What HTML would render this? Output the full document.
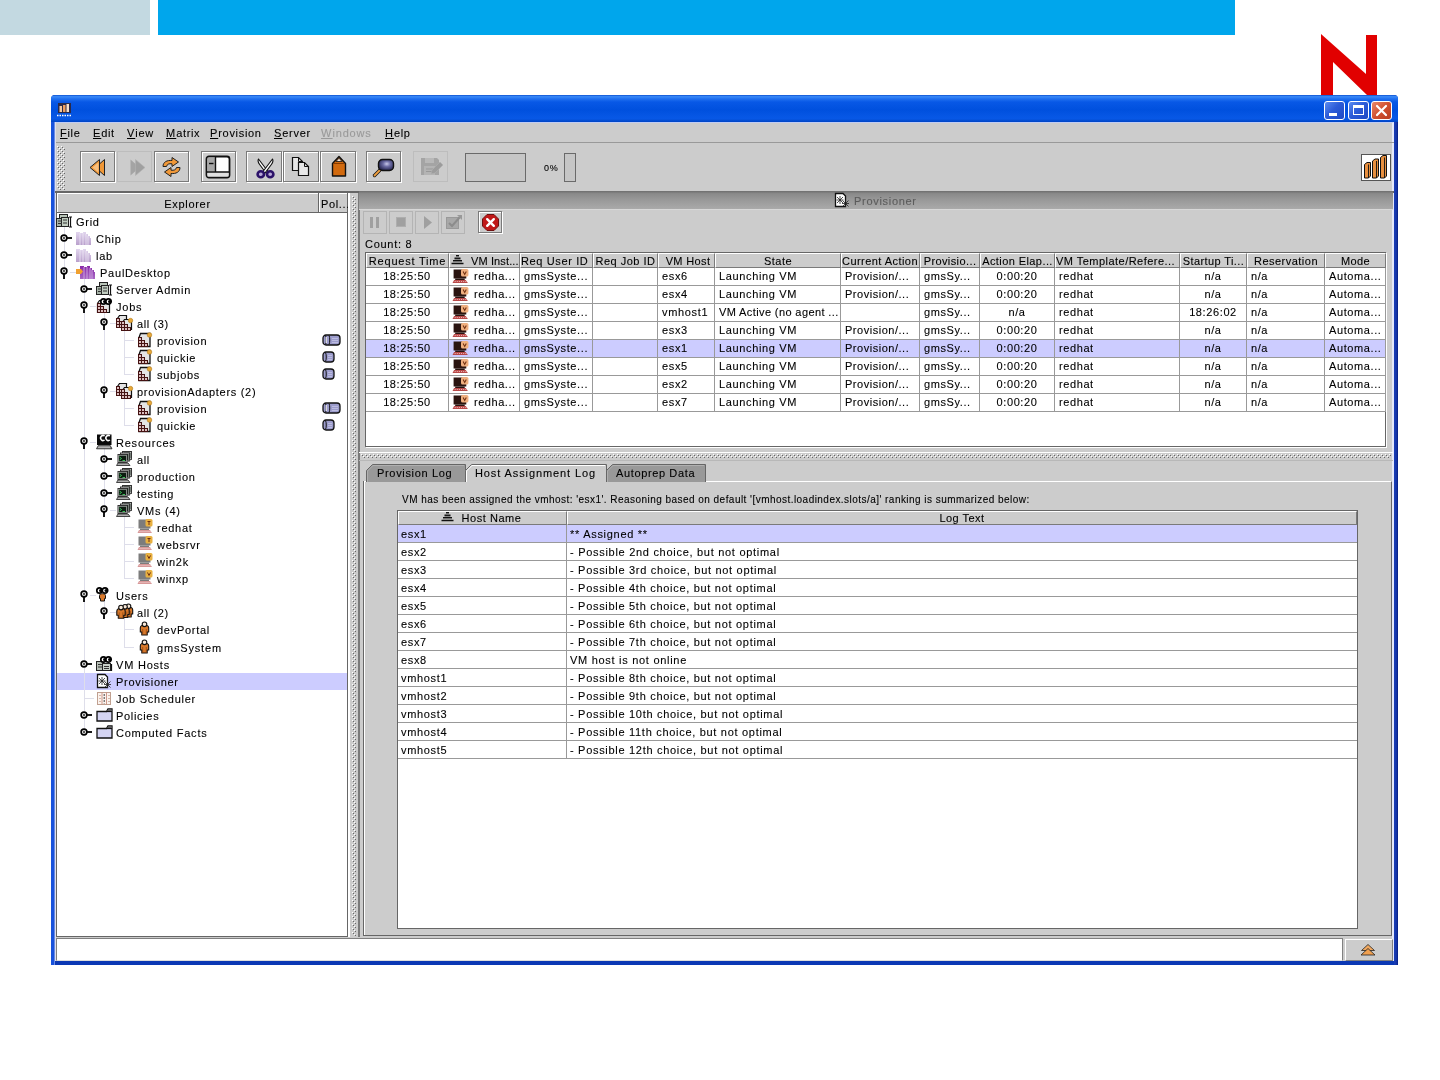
<!DOCTYPE html><html><head><meta charset="utf-8"><title>Provisioner</title><style>
*{box-sizing:border-box;margin:0;padding:0}
html,body{width:1440px;height:1080px;overflow:hidden;background:#fff}
body{position:relative;font-family:"Liberation Sans",sans-serif;font-size:12px;color:#000;letter-spacing:.25px;-webkit-text-stroke-width:.1px}
.a{position:absolute}
.t{position:absolute;white-space:nowrap;line-height:14px;height:14px}
.btn{position:absolute;border:1px solid #7a7a7a;box-shadow:1px 1px 0 #fff,inset 1px 1px 0 #fff;background:#ccc}
.btnd{position:absolute;border:1px solid #bdbdbd;background:#ccc}
.hc{position:absolute;top:0;height:15px;border-right:1px solid #7a7a7a;border-bottom:1px solid #7a7a7a;border-left:1px solid #fff;border-top:1px solid #fff;background:#ccc;line-height:14px;overflow:hidden;white-space:nowrap;text-align:center;letter-spacing:0}
.row{position:absolute;left:0;height:18px;border-bottom:1px solid #999;background:#fff}
.row.sel{background:#ccf}
.c{position:absolute;top:0;height:17px;line-height:17px;border-right:1px solid #999;overflow:hidden;white-space:nowrap;padding-left:4px;letter-spacing:.12px}
.c.ctr{text-align:center;padding-left:0}
u{text-decoration:underline;text-decoration-thickness:1px;text-underline-offset:1px}
svg{position:absolute;overflow:visible}
#root{position:absolute;left:0;top:0;width:1440px;height:1080px;will-change:transform}
</style></head><body><div id="root">
<div class="a" style="left:0;top:0;width:150px;height:35px;background:#c3d9e1"></div>
<div class="a" style="left:158px;top:0;width:1077px;height:35px;background:#00a6ec"></div>
<svg class="a" style="left:0;top:0" width="1440" height="100"><polygon fill="#e10000" points="1321,34 1366,74 1366,35 1377,35 1377,96 1368,96 1333,62 1333,96 1321,96"></polygon></svg>
<div class="a" style="left:51px;top:95px;width:1347px;height:870px;background:#0d3fc4;border-radius:4px 4px 0 0"></div>
<div class="a" style="left:51px;top:95px;width:1347px;height:27px;border-radius:4px 4px 0 0;background:linear-gradient(#0c50d0 0,#3a8af8 6%,#2070f0 14%,#0858e6 26%,#0050de 55%,#0656e4 78%,#0858e6 88%,#0044c4 100%)"></div>
<div class="a" style="left:51px;top:122px;width:4px;height:843px;background:linear-gradient(90deg,#1852dc 0,#1852dc 3px,#6a8ae4 3px)"></div>
<div class="a" style="left:1394px;top:122px;width:4px;height:843px;background:linear-gradient(90deg,#1a3eb8 0,#1434a8 60%,#041c80 100%)"></div>
<div class="a" style="left:55px;top:961px;width:1339px;height:4px;background:#0b38b4"></div>
<div class="a" style="left:55px;top:122px;width:1339px;height:839px;background:#ccc;border-top:1px solid #c0ccf4;border-right:2px solid #e4e8fa"></div>
<svg class="a" style="left:57px;top:102px" width="18" height="16" viewBox="0 0 18 16">
<rect x="1" y="1" width="13" height="10" fill="#2a2a4a"></rect>
<rect x="2.5" y="4" width="2.5" height="6" fill="#f4c9a0"></rect><rect x="6" y="3" width="2.5" height="7" fill="#f0a060"></rect><rect x="9.5" y="2" width="2.5" height="8" fill="#f8e0c8"></rect>
<path d="M0 13.5h15" stroke="#fff" stroke-width="1.6" stroke-dasharray="1.5 1"></path>
</svg>
<div class="a" style="left:1324px;top:101px;width:21px;height:19px;border:1px solid #fff;border-radius:3px;background:linear-gradient(135deg,#5c8cf0 0,#2c5cd8 45%,#1c48c4 100%)"></div>
<div class="a" style="left:1329px;top:113px;width:8px;height:3px;background:#fff"></div>
<div class="a" style="left:1348px;top:101px;width:21px;height:19px;border:1px solid #fff;border-radius:3px;background:linear-gradient(135deg,#5c8cf0 0,#2c5cd8 45%,#1c48c4 100%)"></div>
<div class="a" style="left:1353px;top:105px;width:11px;height:10px;border:1px solid #fff;border-top:3px solid #fff"></div>
<div class="a" style="left:1371px;top:101px;width:21px;height:19px;border:1px solid #fff;border-radius:3px;background:linear-gradient(135deg,#e88a6c 0,#d05030 50%,#b83c20 100%)"></div>
<svg class="a" style="left:1376px;top:105px" width="11" height="11"><path d="M1 1l9 9M10 1l-9 9" stroke="#fff" stroke-width="2.2" stroke-linecap="round"></path></svg>
<div class="a" style="left:55px;top:142px;width:1339px;height:1px;background:#999"></div>
<div class="a" style="left:55px;top:122px;width:1px;height:839px;background:#dcdfee"></div>
<div class="t" style="left:60px;top:126px;color:#000"><u><span style="font-size: 11px; letter-spacing: 0.86px;">F</span></u><span style="font-size: 11px; letter-spacing: 0.58px;">ile</span></div>
<div class="t" style="left:93px;top:126px;color:#000"><u><span style="font-size: 11px; letter-spacing: 0.92px;">E</span></u><span style="font-size: 11px; letter-spacing: 0.6px;">dit</span></div>
<div class="t" style="left:127px;top:126px;color:#000"><u><span style="font-size: 11px; letter-spacing: 0.91px;">V</span></u><span style="font-size: 11px; letter-spacing: 0.75px;">iew</span></div>
<div class="t" style="left:166px;top:126px;color:#000"><u><span style="font-size: 11px; letter-spacing: 1.08px;">M</span></u><span style="font-size: 11px; letter-spacing: 0.63px;">atrix</span></div>
<div class="t" style="left:210px;top:126px;color:#000"><u><span style="font-size: 11px; letter-spacing: 0.92px;">P</span></u><span style="font-size: 11px; letter-spacing: 0.68px;">rovision</span></div>
<div class="t" style="left:274px;top:126px;color:#000"><u><span style="font-size: 11px; letter-spacing: 0.92px;">S</span></u><span style="font-size: 11px; letter-spacing: 0.71px;">erver</span></div>
<div class="t" style="left:321px;top:126px;color:#999"><u><span style="font-size: 11px; letter-spacing: 1.19px;">W</span></u><span style="font-size: 11px; letter-spacing: 0.77px;">indows</span></div>
<div class="t" style="left:385px;top:126px;color:#000"><u><span style="font-size: 11px; letter-spacing: 0.97px;">H</span></u><span style="font-size: 11px; letter-spacing: 0.69px;">elp</span></div>
<div class="a" style="left:55px;top:191px;width:1339px;height:2px;background:#666"></div>
<div class="btn" style="left:80px;top:151px;width:35px;height:31px"></div>
<div class="btn" style="left:154px;top:151px;width:35px;height:31px"></div>
<div class="btn" style="left:201px;top:151px;width:35px;height:31px"></div>
<div class="btn" style="left:366px;top:151px;width:35px;height:31px"></div>
<div class="btn" style="left:246px;top:151px;width:36px;height:31px"></div>
<div class="btn" style="left:283px;top:151px;width:36px;height:31px"></div>
<div class="btn" style="left:320px;top:151px;width:36px;height:31px"></div>
<div class="btnd" style="left:117px;top:151px;width:35px;height:31px"></div>
<div class="btnd" style="left:413px;top:151px;width:35px;height:31px"></div>
<div class="a" style="left:465px;top:153px;width:61px;height:29px;border:1px solid #6a6a6a;background:#c6c6c6"></div>
<div class="t" style="left:544px;top:161px;font-size:10px;letter-spacing:0"><span style="font-size: 9px; letter-spacing: 0.72px;">0%</span></div>
<div class="a" style="left:564px;top:153px;width:12px;height:29px;border:1px solid #6a6a6a;background:#c6c6c6"></div>
<div class="a" style="left:1361px;top:154px;width:30px;height:27px;border:1px solid #555;background:#fff"></div>
<svg style="left:89px;top:158px" width="17" height="19" viewBox="0 0 17 19"><path d="M15.500 1.500v16l-9-8z" fill="#f09838" stroke="#222" stroke-width="1"></path><path d="M10.500 1.500v16l-9.500-8z" fill="#f09838" stroke="#222" stroke-width="1"></path><path d="M9.500 4.500v10l-6-5z" fill="#f8c080"></path></svg>
<svg style="left:129px;top:158px" width="17" height="19" viewBox="0 0 17 19"><path d="M1.500 1.500v16l9-8z" fill="#a4a4a4"></path><path d="M6.500 1.500v16l9.500-8z" fill="#a0a0a0" stroke="#b4b4b4" stroke-width="0.600"></path></svg>
<svg style="left:161px;top:156px" width="21" height="22" viewBox="0 0 21 22"><path d="M2 10.500c0-4.500 4-6.500 9-6V1.500l6.500 4.500-6.500 4.500V7.800c-3-.4-5 .4-5.500 2.700z" fill="#f09838" stroke="#222" stroke-width="1" stroke-linejoin="round"></path><path d="M19 11.500c0 4.500-4 6.500-9 6v3l-6.500-4.500 6.500-4.500v2.700c3 .4 5-.4 5.500-2.700z" fill="#f09838" stroke="#222" stroke-width="1" stroke-linejoin="round"></path></svg>
<svg style="left:205px;top:155px" width="26" height="24" viewBox="0 0 26 24"><rect x="1.500" y="1.500" width="23" height="21" rx="2.500" fill="#fff" stroke="#111" stroke-width="1.800"></rect><rect x="2.500" y="2.500" width="7.500" height="14" fill="#a8a8a8"></rect><rect x="2.500" y="17.500" width="21" height="4" fill="#e0e0e0"></rect><path d="M10.500 2v15M2 17h22" stroke="#111" stroke-width="1.400"></path><path d="M4 8.500h4.500" stroke="#111" stroke-width="1.400"></path></svg>
<svg style="left:256px;top:158px" width="19" height="21" viewBox="0 0 19 21"><path d="M2.500 1c-1 1.500 0 4 1.500 6l6 8 2-1.500z" fill="#fff" stroke="#111" stroke-width="1.100" stroke-linejoin="round"></path><path d="M16.500 1c1 1.500 0 4-1.500 6l-6 8-2-1.500z" fill="#fff" stroke="#111" stroke-width="1.100" stroke-linejoin="round"></path><ellipse cx="4.800" cy="16.300" rx="3.200" ry="3" fill="#b8a8d8" stroke="#2c1268" stroke-width="2.600"></ellipse><ellipse cx="14.200" cy="16.300" rx="3.200" ry="3" fill="#b8a8d8" stroke="#2c1268" stroke-width="2.600"></ellipse></svg>
<svg style="left:291px;top:156px" width="20" height="21" viewBox="0 0 20 21"><path d="M1.5 1.5h6l4 4v9h-10z" fill="#e8e8e8" stroke="#111" stroke-width="1.200"></path><path d="M7.5 1.5v4h4" fill="none" stroke="#111" stroke-width="1"></path><path d="M7.5 6.5h6l4 4v9h-10z" fill="#e8e8e8" stroke="#111" stroke-width="1.200"></path><path d="M13.5 6.5v4h4" fill="none" stroke="#111" stroke-width="1"></path></svg>
<svg style="left:331px;top:155px" width="16" height="23" viewBox="0 0 16 23"><path d="M1.500 8.500L8 1.500l6.500 7v12.500h-13z" fill="#d26a0e" stroke="#111" stroke-width="1.400" stroke-linejoin="round"></path><path d="M5 6.500L8 3.200l3 3.300z" fill="#f4e8e0" stroke="#111" stroke-width="0.800"></path><path d="M3 8.500h10" stroke="#8a3c00" stroke-width="1"></path></svg>
<svg style="left:372px;top:158px" width="23" height="20" viewBox="0 0 23 20"><defs><radialGradient id="lens" cx="0.550" cy="0.400" r="0.700"><stop offset="0" stop-color="#c8c8e8"></stop><stop offset="0.350" stop-color="#6c6ca4"></stop><stop offset="1" stop-color="#14143a"></stop></radialGradient></defs><path d="M9 11L2.500 17.500" stroke="#111" stroke-width="3.400" stroke-linecap="round"></path><path d="M9 11L2.500 17.500" stroke="#f0a040" stroke-width="1.800" stroke-linecap="round"></path><rect x="6.500" y="1.500" width="15" height="11" rx="4" fill="url(#lens)" stroke="#111" stroke-width="1.400"></rect></svg>
<svg style="left:420px;top:157px" width="24" height="19" viewBox="0 0 24 19"><path d="M1 1h16l2 2v15H1z" fill="#a4a4a4"></path><rect x="5" y="1" width="9" height="5" fill="#b8b8b8"></rect><rect x="4" y="9" width="11" height="9" fill="#b4b4b4"></rect><path d="M6 12h7M6 14.500h7" stroke="#999" stroke-width="1"></path><path d="M12 13l8-8 3 3-8 8-4 1z" fill="#9c9c9c" stroke="#b0b0b0" stroke-width="0.600"></path></svg>
<svg style="left:1361px;top:154px" width="30" height="27" viewBox="0 0 30 27"><path d="M3.5 24V10.5l2.500-2h3.500V22l-2 2z" fill="#e89040" stroke="#111" stroke-width="1" stroke-linejoin="round"></path><path d="M7.5 10.5V24" stroke="#111" stroke-width="0.900"></path><path d="M11.5 24V7l2.500-2h3.500V22l-2 2z" fill="#e89040" stroke="#111" stroke-width="1" stroke-linejoin="round"></path><path d="M15.5 7V24" stroke="#111" stroke-width="0.900"></path><path d="M19.5 24V3.5l2.500-2h3.500V22l-2 2z" fill="#e89040" stroke="#111" stroke-width="1" stroke-linejoin="round"></path><path d="M23.5 3.5V24" stroke="#111" stroke-width="0.900"></path></svg>
<div class="a" style="left:56px;top:193px;width:292px;height:744px;background:#fff;border-left:1px solid #666;border-right:1px solid #666;border-bottom:1px solid #666"></div>
<div class="a" style="left:57px;top:193px;width:290px;height:20px;background:#ccc;border-top:1px solid #fff;border-bottom:1px solid #666"></div>
<div class="a" style="left:57px;top:193px;width:1px;height:19px;background:#fff"></div>
<div class="a" style="left:318px;top:193px;width:1px;height:19px;background:#666"></div>
<div class="a" style="left:319px;top:194px;width:1px;height:18px;background:#fff"></div>
<div class="t" style="left:57px;top:197px;width:261px;text-align:center"><span style="font-size: 11px; letter-spacing: 0.71px;">Explorer</span></div>
<div class="t" style="left:321px;top:197px"><span style="font-size: 11px; letter-spacing: 0.63px;">Pol...</span></div>
<div class="a" style="left:348px;top:193px;width:2px;height:744px;background:#fff"></div>
<div class="a" style="left:57px;top:673px;width:290px;height:17px;background:#ccf"></div>
<div class="a" style="left:64px;top:227px;width:1px;height:45px;background:#dedeea"></div>
<div class="a" style="left:84px;top:278px;width:1px;height:454px;background:#dedeea"></div>
<div class="a" style="left:104px;top:312px;width:1px;height:79px;background:#dedeea"></div>
<div class="a" style="left:124px;top:329px;width:1px;height:45px;background:#dedeea"></div>
<div class="a" style="left:124px;top:397px;width:1px;height:28px;background:#dedeea"></div>
<div class="a" style="left:104px;top:448px;width:1px;height:62px;background:#dedeea"></div>
<div class="a" style="left:124px;top:516px;width:1px;height:62px;background:#dedeea"></div>
<div class="a" style="left:104px;top:601px;width:1px;height:11px;background:#dedeea"></div>
<div class="a" style="left:124px;top:618px;width:1px;height:29px;background:#dedeea"></div>
<div class="a" style="left:124px;top:340px;width:10px;height:1px;background:#dedeea"></div>
<div class="a" style="left:124px;top:357px;width:10px;height:1px;background:#dedeea"></div>
<div class="a" style="left:124px;top:374px;width:10px;height:1px;background:#dedeea"></div>
<div class="a" style="left:124px;top:408px;width:10px;height:1px;background:#dedeea"></div>
<div class="a" style="left:124px;top:425px;width:10px;height:1px;background:#dedeea"></div>
<div class="a" style="left:124px;top:527px;width:10px;height:1px;background:#dedeea"></div>
<div class="a" style="left:124px;top:544px;width:10px;height:1px;background:#dedeea"></div>
<div class="a" style="left:124px;top:561px;width:10px;height:1px;background:#dedeea"></div>
<div class="a" style="left:124px;top:578px;width:10px;height:1px;background:#dedeea"></div>
<div class="a" style="left:124px;top:629px;width:10px;height:1px;background:#dedeea"></div>
<div class="a" style="left:124px;top:647px;width:10px;height:1px;background:#dedeea"></div>
<div class="a" style="left:84px;top:698px;width:10px;height:1px;background:#dedeea"></div>
<div class="a" style="left:70px;top:272px;width:6px;height:1px;background:#dedeea"></div>
<div class="a" style="left:90px;top:306px;width:6px;height:1px;background:#dedeea"></div>
<div class="a" style="left:90px;top:442px;width:6px;height:1px;background:#dedeea"></div>
<div class="a" style="left:90px;top:595px;width:6px;height:1px;background:#dedeea"></div>
<div class="a" style="left:110px;top:323px;width:6px;height:1px;background:#dedeea"></div>
<div class="a" style="left:110px;top:391px;width:6px;height:1px;background:#dedeea"></div>
<div class="a" style="left:110px;top:510px;width:6px;height:1px;background:#dedeea"></div>
<div class="a" style="left:110px;top:612px;width:6px;height:1px;background:#dedeea"></div>
<svg style="left:56px;top:213px" width="16" height="16" viewBox="0 0 16 16"><rect x="3.5" y="1.5" width="8" height="5" fill="#b8c4b8" stroke="#222"></rect><rect x="0.5" y="5.500" width="7" height="8" fill="#a8b4a8" stroke="#222"></rect><rect x="5.500" y="4.500" width="7" height="9" fill="#c0ccc0" stroke="#222"></rect><path d="M2 8h4M2 10.500h4M7 7h4M7 10h4" stroke="#333" stroke-width="1"></path><path d="M14.500 4v10M13 4h3M13 14h3" stroke="#111" stroke-width="1.200"></path></svg>
<div class="t" style="left:76px;top:215px"><span style="font-size: 11px; letter-spacing: 0.72px;">Grid</span></div>
<svg style="left:60px;top:234px" width="13" height="9" viewBox="0 0 13 9"><circle cx="4" cy="4" r="2.900" fill="#f0f0f0" stroke="#000" stroke-width="1.600"></circle><circle cx="4" cy="4" r="1.200" fill="#555"></circle><path d="M7 4h5" stroke="#000" stroke-width="1.800"></path></svg>
<svg style="left:76px;top:230px" width="16" height="16" viewBox="0 0 16 16"><defs><linearGradient id="gl" x1="0" y1="0" x2="0" y2="1"><stop offset="0" stop-color="#e2d6ee"></stop><stop offset="1" stop-color="#b9a0cc"></stop></linearGradient></defs><path d="M0 15V2h4v1h3V2h3v2h2v2h2v2h1v7z" fill="url(#gl)"></path><path d="M4 3v12M7 3v12M10 4v11M12 6v9" stroke="#efe8f6" stroke-width="0.800"></path></svg>
<div class="t" style="left:96px;top:232px"><span style="font-size: 11px; letter-spacing: 0.77px;">Chip</span></div>
<svg style="left:60px;top:251px" width="13" height="9" viewBox="0 0 13 9"><circle cx="4" cy="4" r="2.900" fill="#f0f0f0" stroke="#000" stroke-width="1.600"></circle><circle cx="4" cy="4" r="1.200" fill="#555"></circle><path d="M7 4h5" stroke="#000" stroke-width="1.800"></path></svg>
<svg style="left:76px;top:247px" width="16" height="16" viewBox="0 0 16 16"><defs><linearGradient id="gl" x1="0" y1="0" x2="0" y2="1"><stop offset="0" stop-color="#e2d6ee"></stop><stop offset="1" stop-color="#b9a0cc"></stop></linearGradient></defs><path d="M0 15V2h4v1h3V2h3v2h2v2h2v2h1v7z" fill="url(#gl)"></path><path d="M4 3v12M7 3v12M10 4v11M12 6v9" stroke="#efe8f6" stroke-width="0.800"></path></svg>
<div class="t" style="left:96px;top:249px"><span style="font-size: 11px; letter-spacing: 0.69px;">lab</span></div>
<svg style="left:60px;top:267px" width="9" height="13" viewBox="0 0 9 13"><circle cx="4" cy="4" r="2.900" fill="#f0f0f0" stroke="#000" stroke-width="1.600"></circle><circle cx="4" cy="4" r="1.200" fill="#555"></circle><path d="M4 7v5" stroke="#000" stroke-width="1.800"></path></svg>
<svg style="left:76px;top:264px" width="20" height="16" viewBox="0 0 20 16"><defs><linearGradient id="gd" x1="0" y1="0" x2="0" y2="1"><stop offset="0" stop-color="#8a2aa8"></stop><stop offset="1" stop-color="#a868c4"></stop></linearGradient></defs><path d="M4 15V2h4v1h3V2h3v2h2v2h2v2h1v7z" fill="url(#gd)"></path><path d="M8 3v12M11 3v12M14 4v11M16 6v9" stroke="#d8b8e8" stroke-width="0.800"></path><path d="M0 5h5l2 2.500-2 2.500H0z" fill="#f0a030"></path></svg>
<div class="t" style="left:100px;top:266px"><span style="font-size: 11px; letter-spacing: 0.77px;">PaulDesktop</span></div>
<svg style="left:80px;top:285px" width="13" height="9" viewBox="0 0 13 9"><circle cx="4" cy="4" r="2.900" fill="#f0f0f0" stroke="#000" stroke-width="1.600"></circle><circle cx="4" cy="4" r="1.200" fill="#555"></circle><path d="M7 4h5" stroke="#000" stroke-width="1.800"></path></svg>
<svg style="left:96px;top:281px" width="16" height="16" viewBox="0 0 16 16"><rect x="3.5" y="1.5" width="8" height="5" fill="#b8c4b8" stroke="#222"></rect><rect x="0.5" y="5.500" width="7" height="8" fill="#a8b4a8" stroke="#222"></rect><rect x="5.500" y="4.500" width="7" height="9" fill="#c0ccc0" stroke="#222"></rect><path d="M2 8h4M2 10.500h4M7 7h4M7 10h4" stroke="#333" stroke-width="1"></path><path d="M14.500 4v10M13 4h3M13 14h3" stroke="#111" stroke-width="1.200"></path></svg>
<div class="t" style="left:116px;top:283px"><span style="font-size: 11px; letter-spacing: 0.75px;">Server Admin</span></div>
<svg style="left:80px;top:301px" width="9" height="13" viewBox="0 0 9 13"><circle cx="4" cy="4" r="2.900" fill="#f0f0f0" stroke="#000" stroke-width="1.600"></circle><circle cx="4" cy="4" r="1.200" fill="#555"></circle><path d="M4 7v5" stroke="#000" stroke-width="1.800"></path></svg>
<svg style="left:96px;top:298px" width="16" height="16" viewBox="0 0 16 16"><path d="M3.500 2.500h10v12h-12v-9z" fill="#e4e4e4" stroke="#111" stroke-width="1.200"></path><rect x="1.5" y="11.5" width="3" height="3" fill="#dcc0c0" stroke="#451212" stroke-width="1"></rect><rect x="4.5" y="11.5" width="3" height="3" fill="#dcc0c0" stroke="#451212" stroke-width="1"></rect><rect x="7.5" y="11.5" width="3" height="3" fill="#dcc0c0" stroke="#451212" stroke-width="1"></rect><rect x="1.5" y="8.5" width="3" height="3" fill="#dcc0c0" stroke="#451212" stroke-width="1"></rect><rect x="4.5" y="8.5" width="3" height="3" fill="#dcc0c0" stroke="#451212" stroke-width="1"></rect><rect x="1.5" y="5.5" width="3" height="3" fill="#dcc0c0" stroke="#451212" stroke-width="1"></rect><circle cx="7.5" cy="3.5" r="2.700" fill="#fff" stroke="#000" stroke-width="1.700"></circle><circle cx="12.5" cy="3.5" r="2.700" fill="#fff" stroke="#000" stroke-width="1.700"></circle><circle cx="8.6" cy="3.5" r="1.600" fill="#000"></circle><circle cx="13.6" cy="3.5" r="1.600" fill="#000"></circle></svg>
<div class="t" style="left:116px;top:300px"><span style="font-size: 11px; letter-spacing: 0.78px;">Jobs</span></div>
<svg style="left:100px;top:318px" width="9" height="13" viewBox="0 0 9 13"><circle cx="4" cy="4" r="2.900" fill="#f0f0f0" stroke="#000" stroke-width="1.600"></circle><circle cx="4" cy="4" r="1.200" fill="#555"></circle><path d="M4 7v5" stroke="#000" stroke-width="1.800"></path></svg>
<svg style="left:116px;top:315px" width="17" height="16" viewBox="0 0 17 16"><path d="M3.500 0.500h7v10h-9v-7z" fill="#e4e4e4" stroke="#111" stroke-width="1.200"></path><rect x="0.5" y="9.5" width="3" height="3" fill="#dcc0c0" stroke="#451212" stroke-width="1"></rect><rect x="3.5" y="9.5" width="3" height="3" fill="#dcc0c0" stroke="#451212" stroke-width="1"></rect><rect x="6.5" y="9.5" width="3" height="3" fill="#dcc0c0" stroke="#451212" stroke-width="1"></rect><rect x="0.5" y="6.5" width="3" height="3" fill="#dcc0c0" stroke="#451212" stroke-width="1"></rect><rect x="3.5" y="6.5" width="3" height="3" fill="#dcc0c0" stroke="#451212" stroke-width="1"></rect><rect x="0.5" y="3.5" width="3" height="3" fill="#dcc0c0" stroke="#451212" stroke-width="1"></rect><path d="M8.500 4.500h7v10h-9v-7z" fill="#e4e4e4" stroke="#111" stroke-width="1.200"></path><rect x="5.5" y="12.5" width="3" height="3" fill="#dcc0c0" stroke="#451212" stroke-width="1"></rect><rect x="8.5" y="12.5" width="3" height="3" fill="#dcc0c0" stroke="#451212" stroke-width="1"></rect><rect x="11.5" y="12.5" width="3" height="3" fill="#dcc0c0" stroke="#451212" stroke-width="1"></rect><rect x="5.5" y="9.5" width="3" height="3" fill="#dcc0c0" stroke="#451212" stroke-width="1"></rect><rect x="8.5" y="9.5" width="3" height="3" fill="#dcc0c0" stroke="#451212" stroke-width="1"></rect><rect x="5.5" y="6.5" width="3" height="3" fill="#dcc0c0" stroke="#451212" stroke-width="1"></rect><circle cx="14.500" cy="5.500" r="2.200" fill="#e8a838" stroke="#b07818" stroke-width="0.600"></circle></svg>
<div class="t" style="left:137px;top:317px"><span style="font-size: 11px; letter-spacing: 0.61px;">all (3)</span></div>
<svg style="left:137px;top:332px" width="16" height="16" viewBox="0 0 16 16"><path d="M3.500 1.500h9.500v13h-11v-9z" fill="#e4e4e4" stroke="#111" stroke-width="1.300"></path><rect x="1.5" y="11.5" width="3" height="3" fill="#dcc0c0" stroke="#451212" stroke-width="1"></rect><rect x="4.5" y="11.5" width="3" height="3" fill="#dcc0c0" stroke="#451212" stroke-width="1"></rect><rect x="7.5" y="11.5" width="3" height="3" fill="#dcc0c0" stroke="#451212" stroke-width="1"></rect><rect x="1.5" y="8.5" width="3" height="3" fill="#dcc0c0" stroke="#451212" stroke-width="1"></rect><rect x="4.5" y="8.5" width="3" height="3" fill="#dcc0c0" stroke="#451212" stroke-width="1"></rect><rect x="1.5" y="5.5" width="3" height="3" fill="#dcc0c0" stroke="#451212" stroke-width="1"></rect><circle cx="12.500" cy="3" r="2.300" fill="#e8a838" stroke="#b07818" stroke-width="0.600"></circle></svg>
<div class="t" style="left:157px;top:334px"><span style="font-size: 11px; letter-spacing: 0.69px;">provision</span></div>
<svg style="left:322px;top:334px" width="19" height="12" viewBox="0 0 19 12"><rect x="1" y="1" width="17" height="10" rx="3" fill="#9c9ccc" stroke="#111" stroke-width="1.300"></rect><path d="M3.500 1.500c1 1.500 1 7.500 0 9M7 1.500c1 1.500 1 7.500 0 9" stroke="#111" stroke-width="1" fill="none"></path><path d="M4.300 3v6" stroke="#fff" stroke-width="1"></path><path d="M10 4.500h6M10 6.500h6M10 8.500h6" stroke="#c4c4e4" stroke-width="0.800"></path></svg>
<svg style="left:137px;top:349px" width="16" height="16" viewBox="0 0 16 16"><path d="M3.500 1.500h9.500v13h-11v-9z" fill="#e4e4e4" stroke="#111" stroke-width="1.300"></path><rect x="1.5" y="11.5" width="3" height="3" fill="#dcc0c0" stroke="#451212" stroke-width="1"></rect><rect x="4.5" y="11.5" width="3" height="3" fill="#dcc0c0" stroke="#451212" stroke-width="1"></rect><rect x="7.5" y="11.5" width="3" height="3" fill="#dcc0c0" stroke="#451212" stroke-width="1"></rect><rect x="1.5" y="8.5" width="3" height="3" fill="#dcc0c0" stroke="#451212" stroke-width="1"></rect><rect x="4.5" y="8.5" width="3" height="3" fill="#dcc0c0" stroke="#451212" stroke-width="1"></rect><rect x="1.5" y="5.5" width="3" height="3" fill="#dcc0c0" stroke="#451212" stroke-width="1"></rect><circle cx="12.500" cy="3" r="2.300" fill="#e8a838" stroke="#b07818" stroke-width="0.600"></circle></svg>
<div class="t" style="left:157px;top:351px"><span style="font-size: 11px; letter-spacing: 0.69px;">quickie</span></div>
<svg style="left:322px;top:351px" width="13" height="12" viewBox="0 0 13 12"><rect x="1" y="1" width="11" height="10" rx="3" fill="#9c9ccc" stroke="#111" stroke-width="1.300"></rect><path d="M3.500 1.500c1 1.500 1 7.500 0 9" stroke="#111" stroke-width="1" fill="none"></path><path d="M6 4.500h4M6 6.500h4M6 8.500h4" stroke="#c4c4e4" stroke-width="0.800"></path></svg>
<svg style="left:137px;top:366px" width="16" height="16" viewBox="0 0 16 16"><path d="M3.500 1.500h9.500v13h-11v-9z" fill="#e4e4e4" stroke="#111" stroke-width="1.300"></path><rect x="1.5" y="11.5" width="3" height="3" fill="#dcc0c0" stroke="#451212" stroke-width="1"></rect><rect x="4.5" y="11.5" width="3" height="3" fill="#dcc0c0" stroke="#451212" stroke-width="1"></rect><rect x="7.5" y="11.5" width="3" height="3" fill="#dcc0c0" stroke="#451212" stroke-width="1"></rect><rect x="1.5" y="8.5" width="3" height="3" fill="#dcc0c0" stroke="#451212" stroke-width="1"></rect><rect x="4.5" y="8.5" width="3" height="3" fill="#dcc0c0" stroke="#451212" stroke-width="1"></rect><rect x="1.5" y="5.5" width="3" height="3" fill="#dcc0c0" stroke="#451212" stroke-width="1"></rect><circle cx="12.500" cy="3" r="2.300" fill="#e8a838" stroke="#b07818" stroke-width="0.600"></circle></svg>
<div class="t" style="left:157px;top:368px"><span style="font-size: 11px; letter-spacing: 0.74px;">subjobs</span></div>
<svg style="left:322px;top:368px" width="13" height="12" viewBox="0 0 13 12"><rect x="1" y="1" width="11" height="10" rx="3" fill="#9c9ccc" stroke="#111" stroke-width="1.300"></rect><path d="M3.500 1.500c1 1.500 1 7.500 0 9" stroke="#111" stroke-width="1" fill="none"></path><path d="M6 4.500h4M6 6.500h4M6 8.500h4" stroke="#c4c4e4" stroke-width="0.800"></path></svg>
<svg style="left:100px;top:386px" width="9" height="13" viewBox="0 0 9 13"><circle cx="4" cy="4" r="2.900" fill="#f0f0f0" stroke="#000" stroke-width="1.600"></circle><circle cx="4" cy="4" r="1.200" fill="#555"></circle><path d="M4 7v5" stroke="#000" stroke-width="1.800"></path></svg>
<svg style="left:116px;top:383px" width="17" height="16" viewBox="0 0 17 16"><path d="M3.500 0.500h7v10h-9v-7z" fill="#e4e4e4" stroke="#111" stroke-width="1.200"></path><rect x="0.5" y="9.5" width="3" height="3" fill="#dcc0c0" stroke="#451212" stroke-width="1"></rect><rect x="3.5" y="9.5" width="3" height="3" fill="#dcc0c0" stroke="#451212" stroke-width="1"></rect><rect x="6.5" y="9.5" width="3" height="3" fill="#dcc0c0" stroke="#451212" stroke-width="1"></rect><rect x="0.5" y="6.5" width="3" height="3" fill="#dcc0c0" stroke="#451212" stroke-width="1"></rect><rect x="3.5" y="6.5" width="3" height="3" fill="#dcc0c0" stroke="#451212" stroke-width="1"></rect><rect x="0.5" y="3.5" width="3" height="3" fill="#dcc0c0" stroke="#451212" stroke-width="1"></rect><path d="M8.500 4.500h7v10h-9v-7z" fill="#e4e4e4" stroke="#111" stroke-width="1.200"></path><rect x="5.5" y="12.5" width="3" height="3" fill="#dcc0c0" stroke="#451212" stroke-width="1"></rect><rect x="8.5" y="12.5" width="3" height="3" fill="#dcc0c0" stroke="#451212" stroke-width="1"></rect><rect x="11.5" y="12.5" width="3" height="3" fill="#dcc0c0" stroke="#451212" stroke-width="1"></rect><rect x="5.5" y="9.5" width="3" height="3" fill="#dcc0c0" stroke="#451212" stroke-width="1"></rect><rect x="8.5" y="9.5" width="3" height="3" fill="#dcc0c0" stroke="#451212" stroke-width="1"></rect><rect x="5.5" y="6.5" width="3" height="3" fill="#dcc0c0" stroke="#451212" stroke-width="1"></rect><circle cx="14.500" cy="5.500" r="2.200" fill="#e8a838" stroke="#b07818" stroke-width="0.600"></circle></svg>
<div class="t" style="left:137px;top:385px"><span style="font-size: 11px; letter-spacing: 0.7px;">provisionAdapters (2)</span></div>
<svg style="left:137px;top:400px" width="16" height="16" viewBox="0 0 16 16"><path d="M3.500 1.500h9.500v13h-11v-9z" fill="#e4e4e4" stroke="#111" stroke-width="1.300"></path><rect x="1.5" y="11.5" width="3" height="3" fill="#dcc0c0" stroke="#451212" stroke-width="1"></rect><rect x="4.5" y="11.5" width="3" height="3" fill="#dcc0c0" stroke="#451212" stroke-width="1"></rect><rect x="7.5" y="11.5" width="3" height="3" fill="#dcc0c0" stroke="#451212" stroke-width="1"></rect><rect x="1.5" y="8.5" width="3" height="3" fill="#dcc0c0" stroke="#451212" stroke-width="1"></rect><rect x="4.5" y="8.5" width="3" height="3" fill="#dcc0c0" stroke="#451212" stroke-width="1"></rect><rect x="1.5" y="5.5" width="3" height="3" fill="#dcc0c0" stroke="#451212" stroke-width="1"></rect><circle cx="12.500" cy="3" r="2.300" fill="#e8a838" stroke="#b07818" stroke-width="0.600"></circle></svg>
<div class="t" style="left:157px;top:402px"><span style="font-size: 11px; letter-spacing: 0.69px;">provision</span></div>
<svg style="left:322px;top:402px" width="19" height="12" viewBox="0 0 19 12"><rect x="1" y="1" width="17" height="10" rx="3" fill="#9c9ccc" stroke="#111" stroke-width="1.300"></rect><path d="M3.500 1.500c1 1.500 1 7.500 0 9M7 1.500c1 1.500 1 7.500 0 9" stroke="#111" stroke-width="1" fill="none"></path><path d="M4.300 3v6" stroke="#fff" stroke-width="1"></path><path d="M10 4.500h6M10 6.500h6M10 8.500h6" stroke="#c4c4e4" stroke-width="0.800"></path></svg>
<svg style="left:137px;top:417px" width="16" height="16" viewBox="0 0 16 16"><path d="M3.500 1.500h9.500v13h-11v-9z" fill="#e4e4e4" stroke="#111" stroke-width="1.300"></path><rect x="1.5" y="11.5" width="3" height="3" fill="#dcc0c0" stroke="#451212" stroke-width="1"></rect><rect x="4.5" y="11.5" width="3" height="3" fill="#dcc0c0" stroke="#451212" stroke-width="1"></rect><rect x="7.5" y="11.5" width="3" height="3" fill="#dcc0c0" stroke="#451212" stroke-width="1"></rect><rect x="1.5" y="8.5" width="3" height="3" fill="#dcc0c0" stroke="#451212" stroke-width="1"></rect><rect x="4.5" y="8.5" width="3" height="3" fill="#dcc0c0" stroke="#451212" stroke-width="1"></rect><rect x="1.5" y="5.5" width="3" height="3" fill="#dcc0c0" stroke="#451212" stroke-width="1"></rect><circle cx="12.500" cy="3" r="2.300" fill="#e8a838" stroke="#b07818" stroke-width="0.600"></circle></svg>
<div class="t" style="left:157px;top:419px"><span style="font-size: 11px; letter-spacing: 0.69px;">quickie</span></div>
<svg style="left:322px;top:419px" width="13" height="12" viewBox="0 0 13 12"><rect x="1" y="1" width="11" height="10" rx="3" fill="#9c9ccc" stroke="#111" stroke-width="1.300"></rect><path d="M3.500 1.500c1 1.500 1 7.500 0 9" stroke="#111" stroke-width="1" fill="none"></path><path d="M6 4.500h4M6 6.500h4M6 8.500h4" stroke="#c4c4e4" stroke-width="0.800"></path></svg>
<svg style="left:80px;top:437px" width="9" height="13" viewBox="0 0 9 13"><circle cx="4" cy="4" r="2.900" fill="#f0f0f0" stroke="#000" stroke-width="1.600"></circle><circle cx="4" cy="4" r="1.200" fill="#555"></circle><path d="M4 7v5" stroke="#000" stroke-width="1.800"></path></svg>
<svg style="left:96px;top:434px" width="17" height="16" viewBox="0 0 17 16"><rect x="1" y="0.500" width="14.500" height="10.500" fill="#0a0a0a"></rect><path d="M0.500 14.800l2-3.600h11.500l2 3.600z" fill="#8c8c8c" stroke="#222" stroke-width="0.800"></path><path d="M2.500 13.300h11.500" stroke="#f0f0f0" stroke-width="1" stroke-dasharray="1 1"></path><path d="M8.6 2A2.500 2.500 0 1 0 8.6 6" fill="none" stroke="#fff" stroke-width="1.500"></path><path d="M13.9 2A2.500 2.500 0 1 0 13.9 6" fill="none" stroke="#fff" stroke-width="1.500"></path></svg>
<div class="t" style="left:116px;top:436px"><span style="font-size: 11px; letter-spacing: 0.78px;">Resources</span></div>
<svg style="left:100px;top:455px" width="13" height="9" viewBox="0 0 13 9"><circle cx="4" cy="4" r="2.900" fill="#f0f0f0" stroke="#000" stroke-width="1.600"></circle><circle cx="4" cy="4" r="1.200" fill="#555"></circle><path d="M7 4h5" stroke="#000" stroke-width="1.800"></path></svg>
<svg style="left:116px;top:451px" width="18" height="16" viewBox="0 0 18 16"><g transform="translate(6,0)"><rect x="0.500" y="0.500" width="9" height="8" fill="#e0e0e0" stroke="#333" stroke-width="1"></rect><rect x="1.500" y="1.500" width="7" height="6" fill="#0c1c10"></rect></g><g transform="translate(4,1.5)"><rect x="0.500" y="0.500" width="9" height="8" fill="#e0e0e0" stroke="#333" stroke-width="1"></rect><rect x="1.500" y="1.500" width="7" height="6" fill="#0c1c10"></rect></g><g transform="translate(1.5,3)"><rect x="0.500" y="0.500" width="9" height="8" fill="#e0e0e0" stroke="#333" stroke-width="1"></rect><rect x="1.500" y="1.500" width="7" height="6" fill="#0c1c10"></rect></g><path d="M3.500 6l2 1.500-2 1.500M6.500 9.500h2.500" stroke="#40d060" stroke-width="0.900" fill="none"></path><path d="M0.500 14.500l1.500-2.500h10l2 2.500z" fill="#b0b0b0" stroke="#333" stroke-width="0.900"></path><path d="M12 10l4-2" stroke="#555" stroke-width="1"></path></svg>
<div class="t" style="left:137px;top:453px"><span style="font-size: 11px; letter-spacing: 0.58px;">all</span></div>
<svg style="left:100px;top:472px" width="13" height="9" viewBox="0 0 13 9"><circle cx="4" cy="4" r="2.900" fill="#f0f0f0" stroke="#000" stroke-width="1.600"></circle><circle cx="4" cy="4" r="1.200" fill="#555"></circle><path d="M7 4h5" stroke="#000" stroke-width="1.800"></path></svg>
<svg style="left:116px;top:468px" width="18" height="16" viewBox="0 0 18 16"><g transform="translate(6,0)"><rect x="0.500" y="0.500" width="9" height="8" fill="#e0e0e0" stroke="#333" stroke-width="1"></rect><rect x="1.500" y="1.500" width="7" height="6" fill="#0c1c10"></rect></g><g transform="translate(4,1.5)"><rect x="0.500" y="0.500" width="9" height="8" fill="#e0e0e0" stroke="#333" stroke-width="1"></rect><rect x="1.500" y="1.500" width="7" height="6" fill="#0c1c10"></rect></g><g transform="translate(1.5,3)"><rect x="0.500" y="0.500" width="9" height="8" fill="#e0e0e0" stroke="#333" stroke-width="1"></rect><rect x="1.500" y="1.500" width="7" height="6" fill="#0c1c10"></rect></g><path d="M3.500 6l2 1.500-2 1.500M6.500 9.500h2.500" stroke="#40d060" stroke-width="0.900" fill="none"></path><path d="M0.500 14.500l1.500-2.500h10l2 2.500z" fill="#b0b0b0" stroke="#333" stroke-width="0.900"></path><path d="M12 10l4-2" stroke="#555" stroke-width="1"></path></svg>
<div class="t" style="left:137px;top:470px"><span style="font-size: 11px; letter-spacing: 0.72px;">production</span></div>
<svg style="left:100px;top:489px" width="13" height="9" viewBox="0 0 13 9"><circle cx="4" cy="4" r="2.900" fill="#f0f0f0" stroke="#000" stroke-width="1.600"></circle><circle cx="4" cy="4" r="1.200" fill="#555"></circle><path d="M7 4h5" stroke="#000" stroke-width="1.800"></path></svg>
<svg style="left:116px;top:485px" width="18" height="16" viewBox="0 0 18 16"><g transform="translate(6,0)"><rect x="0.500" y="0.500" width="9" height="8" fill="#e0e0e0" stroke="#333" stroke-width="1"></rect><rect x="1.500" y="1.500" width="7" height="6" fill="#0c1c10"></rect></g><g transform="translate(4,1.5)"><rect x="0.500" y="0.500" width="9" height="8" fill="#e0e0e0" stroke="#333" stroke-width="1"></rect><rect x="1.500" y="1.500" width="7" height="6" fill="#0c1c10"></rect></g><g transform="translate(1.5,3)"><rect x="0.500" y="0.500" width="9" height="8" fill="#e0e0e0" stroke="#333" stroke-width="1"></rect><rect x="1.500" y="1.500" width="7" height="6" fill="#0c1c10"></rect></g><path d="M3.500 6l2 1.500-2 1.500M6.500 9.500h2.500" stroke="#40d060" stroke-width="0.900" fill="none"></path><path d="M0.500 14.500l1.500-2.500h10l2 2.500z" fill="#b0b0b0" stroke="#333" stroke-width="0.900"></path><path d="M12 10l4-2" stroke="#555" stroke-width="1"></path></svg>
<div class="t" style="left:137px;top:487px"><span style="font-size: 11px; letter-spacing: 0.67px;">testing</span></div>
<svg style="left:100px;top:505px" width="9" height="13" viewBox="0 0 9 13"><circle cx="4" cy="4" r="2.900" fill="#f0f0f0" stroke="#000" stroke-width="1.600"></circle><circle cx="4" cy="4" r="1.200" fill="#555"></circle><path d="M4 7v5" stroke="#000" stroke-width="1.800"></path></svg>
<svg style="left:116px;top:502px" width="18" height="16" viewBox="0 0 18 16"><g transform="translate(6,0)"><rect x="0.500" y="0.500" width="9" height="8" fill="#e0e0e0" stroke="#333" stroke-width="1"></rect><rect x="1.500" y="1.500" width="7" height="6" fill="#0c1c10"></rect></g><g transform="translate(4,1.5)"><rect x="0.500" y="0.500" width="9" height="8" fill="#e0e0e0" stroke="#333" stroke-width="1"></rect><rect x="1.500" y="1.500" width="7" height="6" fill="#0c1c10"></rect></g><g transform="translate(1.5,3)"><rect x="0.500" y="0.500" width="9" height="8" fill="#e0e0e0" stroke="#333" stroke-width="1"></rect><rect x="1.500" y="1.500" width="7" height="6" fill="#0c1c10"></rect></g><path d="M3.500 6l2 1.500-2 1.500M6.500 9.500h2.500" stroke="#40d060" stroke-width="0.900" fill="none"></path><path d="M0.500 14.500l1.500-2.500h10l2 2.500z" fill="#b0b0b0" stroke="#333" stroke-width="0.900"></path><path d="M12 10l4-2" stroke="#555" stroke-width="1"></path></svg>
<div class="t" style="left:137px;top:504px"><span style="font-size: 11px; letter-spacing: 0.75px;">VMs (4)</span></div>
<svg style="left:137px;top:519px" width="17" height="15" viewBox="0 0 17 15"><rect x="1.500" y="0.500" width="12" height="9" fill="#7c7c7c"></rect><rect x="8.500" y="0" width="7" height="7.500" rx="1.500" fill="#e8b040"></rect><path d="M10.500 2.500h3M12 2.500v3.500" stroke="#703010" stroke-width="1" fill="none"></path><path d="M3 9.500h9v1.500h-9z" fill="#7c7c7c"></path><path d="M0.500 14l1.500-3h11l2 3z" fill="#d89898"></path><path d="M2.500 12.500h11" stroke="#f0d0d0" stroke-width="1" stroke-dasharray="1 1"></path></svg>
<div class="t" style="left:157px;top:521px"><span style="font-size: 11px; letter-spacing: 0.72px;">redhat</span></div>
<svg style="left:137px;top:536px" width="17" height="15" viewBox="0 0 17 15"><rect x="1.500" y="0.500" width="12" height="9" fill="#7c7c7c"></rect><rect x="8.500" y="0" width="7" height="7.500" rx="1.500" fill="#e8b040"></rect><path d="M10.500 2.500h3M12 2.500v3.500" stroke="#703010" stroke-width="1" fill="none"></path><path d="M3 9.500h9v1.500h-9z" fill="#7c7c7c"></path><path d="M0.500 14l1.500-3h11l2 3z" fill="#d89898"></path><path d="M2.500 12.500h11" stroke="#f0d0d0" stroke-width="1" stroke-dasharray="1 1"></path></svg>
<div class="t" style="left:157px;top:538px"><span style="font-size: 11px; letter-spacing: 0.75px;">websrvr</span></div>
<svg style="left:137px;top:553px" width="17" height="15" viewBox="0 0 17 15"><rect x="1.500" y="0.500" width="12" height="9" fill="#7c7c7c"></rect><rect x="8.500" y="0" width="7" height="7.500" rx="1.500" fill="#e8b040"></rect><path d="M10.500 2.500l1.500 3 1.500-3" stroke="#703010" stroke-width="1" fill="none"></path><path d="M3 9.500h9v1.500h-9z" fill="#7c7c7c"></path><path d="M0.500 14l1.500-3h11l2 3z" fill="#d89898"></path><path d="M2.500 12.500h11" stroke="#f0d0d0" stroke-width="1" stroke-dasharray="1 1"></path></svg>
<div class="t" style="left:157px;top:555px"><span style="font-size: 11px; letter-spacing: 0.76px;">win2k</span></div>
<svg style="left:137px;top:570px" width="17" height="15" viewBox="0 0 17 15"><rect x="1.500" y="0.500" width="12" height="9" fill="#7c7c7c"></rect><rect x="8.500" y="0" width="7" height="7.500" rx="1.500" fill="#e8b040"></rect><path d="M10.500 2.500l1.500 3 1.500-3" stroke="#703010" stroke-width="1" fill="none"></path><path d="M3 9.500h9v1.500h-9z" fill="#7c7c7c"></path><path d="M0.500 14l1.500-3h11l2 3z" fill="#d89898"></path><path d="M2.500 12.500h11" stroke="#f0d0d0" stroke-width="1" stroke-dasharray="1 1"></path></svg>
<div class="t" style="left:157px;top:572px"><span style="font-size: 11px; letter-spacing: 0.76px;">winxp</span></div>
<svg style="left:80px;top:590px" width="9" height="13" viewBox="0 0 9 13"><circle cx="4" cy="4" r="2.900" fill="#f0f0f0" stroke="#000" stroke-width="1.600"></circle><circle cx="4" cy="4" r="1.200" fill="#555"></circle><path d="M4 7v5" stroke="#000" stroke-width="1.800"></path></svg>
<svg style="left:96px;top:587px" width="14" height="15" viewBox="0 0 14 15"><circle cx="3.5" cy="3.5" r="2.700" fill="#fff" stroke="#000" stroke-width="1.700"></circle><circle cx="9" cy="3.5" r="2.700" fill="#fff" stroke="#000" stroke-width="1.700"></circle><circle cx="4.6" cy="3.5" r="1.600" fill="#000"></circle><circle cx="10.1" cy="3.5" r="1.600" fill="#000"></circle><path d="M3.500 8.500c0-1 1-1.800 3-1.800s3 .8 3 1.800v3h-1v2.500h-4v-2.500h-1z" fill="#d8782a" stroke="#111" stroke-width="1"></path></svg>
<div class="t" style="left:116px;top:589px"><span style="font-size: 11px; letter-spacing: 0.77px;">Users</span></div>
<svg style="left:100px;top:607px" width="9" height="13" viewBox="0 0 9 13"><circle cx="4" cy="4" r="2.900" fill="#f0f0f0" stroke="#000" stroke-width="1.600"></circle><circle cx="4" cy="4" r="1.200" fill="#555"></circle><path d="M4 7v5" stroke="#000" stroke-width="1.800"></path></svg>
<svg style="left:116px;top:604px" width="18" height="15" viewBox="0 0 18 15"><g transform="translate(7.5,-0.5)"><path d="M0.800 6.500c0-2 1.500-3 4.200-3s4.200 1 4.200 3v4h-1.500v3h-5.400v-3h-1.500z" fill="#d8782a" stroke="#111" stroke-width="1.100" stroke-linejoin="round"></path><path d="M3.200 7.500v6M6.800 7.500v6" stroke="#8a4410" stroke-width="0.700"></path><circle cx="5" cy="2.800" r="2.300" fill="#f8e8d8" stroke="#111" stroke-width="1.100"></circle></g><g transform="translate(4,0)"><path d="M0.800 6.500c0-2 1.500-3 4.200-3s4.200 1 4.200 3v4h-1.500v3h-5.400v-3h-1.500z" fill="#d8782a" stroke="#111" stroke-width="1.100" stroke-linejoin="round"></path><path d="M3.200 7.500v6M6.800 7.500v6" stroke="#8a4410" stroke-width="0.700"></path><circle cx="5" cy="2.800" r="2.300" fill="#f8e8d8" stroke="#111" stroke-width="1.100"></circle></g><g transform="translate(0,0.8)"><path d="M0.800 6.500c0-2 1.500-3 4.200-3s4.200 1 4.200 3v4h-1.500v3h-5.400v-3h-1.500z" fill="#d8782a" stroke="#111" stroke-width="1.100" stroke-linejoin="round"></path><path d="M3.200 7.500v6M6.800 7.500v6" stroke="#8a4410" stroke-width="0.700"></path><circle cx="5" cy="2.800" r="2.300" fill="#f8e8d8" stroke="#111" stroke-width="1.100"></circle></g></svg>
<div class="t" style="left:137px;top:606px"><span style="font-size: 11px; letter-spacing: 0.61px;">all (2)</span></div>
<svg style="left:137px;top:621px" width="12" height="15" viewBox="0 0 12 15"><g transform="translate(2.5,0.5)"><path d="M0.800 6.500c0-2 1.500-3 4.200-3s4.200 1 4.200 3v4h-1.500v3h-5.400v-3h-1.500z" fill="#d8782a" stroke="#111" stroke-width="1.100" stroke-linejoin="round"></path><path d="M3.200 7.500v6M6.800 7.500v6" stroke="#8a4410" stroke-width="0.700"></path><circle cx="5" cy="2.800" r="2.300" fill="#f8e8d8" stroke="#111" stroke-width="1.100"></circle></g></svg>
<div class="t" style="left:157px;top:623px"><span style="font-size: 11px; letter-spacing: 0.72px;">devPortal</span></div>
<svg style="left:137px;top:639px" width="12" height="15" viewBox="0 0 12 15"><g transform="translate(2.5,0.5)"><path d="M0.800 6.500c0-2 1.500-3 4.200-3s4.200 1 4.200 3v4h-1.500v3h-5.400v-3h-1.500z" fill="#d8782a" stroke="#111" stroke-width="1.100" stroke-linejoin="round"></path><path d="M3.200 7.500v6M6.800 7.500v6" stroke="#8a4410" stroke-width="0.700"></path><circle cx="5" cy="2.800" r="2.300" fill="#f8e8d8" stroke="#111" stroke-width="1.100"></circle></g></svg>
<div class="t" style="left:157px;top:641px"><span style="font-size: 11px; letter-spacing: 0.83px;">gmsSystem</span></div>
<svg style="left:80px;top:660px" width="13" height="9" viewBox="0 0 13 9"><circle cx="4" cy="4" r="2.900" fill="#f0f0f0" stroke="#000" stroke-width="1.600"></circle><circle cx="4" cy="4" r="1.200" fill="#555"></circle><path d="M7 4h5" stroke="#000" stroke-width="1.800"></path></svg>
<svg style="left:96px;top:656px" width="17" height="16" viewBox="0 0 17 16"><rect x="0.500" y="5.500" width="7" height="9" fill="#b8c0b8" stroke="#222"></rect><rect x="6.500" y="7.500" width="8" height="7" fill="#c8d0c8" stroke="#222"></rect><path d="M2 8.500h4M2 11h4M8 10.500h5M8 12.500h5" stroke="#333"></path><path d="M15.500 8v7" stroke="#111" stroke-width="1.200"></path><circle cx="7.5" cy="3.5" r="2.700" fill="#fff" stroke="#000" stroke-width="1.700"></circle><circle cx="12.5" cy="3.5" r="2.700" fill="#fff" stroke="#000" stroke-width="1.700"></circle><circle cx="8.6" cy="3.5" r="1.600" fill="#000"></circle><circle cx="13.6" cy="3.5" r="1.600" fill="#000"></circle></svg>
<div class="t" style="left:116px;top:658px"><span style="font-size: 11px; letter-spacing: 0.79px;">VM Hosts</span></div>
<svg style="left:96px;top:673px" width="16" height="16" viewBox="0 0 16 16"><path d="M1.500 1.500h7.500l2.500 2.500v10.500h-10z" fill="#fff" stroke="#111" stroke-width="1.300"></path><path d="M3 5l6 6M9 5l-6 6M6 4v8M2.500 8h7" stroke="#222" stroke-width="0.800"></path><path d="M8.500 8.500l6 6M14.500 8.500l-6 6M11.500 8v7M8 11.500h7" stroke="#222" stroke-width="0.800"></path></svg>
<div class="t" style="left:116px;top:675px"><span style="font-size: 11px; letter-spacing: 0.7px;">Provisioner</span></div>
<svg style="left:96px;top:690px" width="16" height="16" viewBox="0 0 16 16"><rect x="1.500" y="2.500" width="13" height="12" fill="#fbf3ee" stroke="#c0a090" stroke-width="1"></rect><path d="M6 2.500v12M10.500 2.500v12" stroke="#c89080" stroke-width="0.900"></path><path d="M3 5.500h2M3 8.500h2M3 11.500h2M12 5.500h2M12 8.500h2M12 11.500h2" stroke="#d8b8a8" stroke-width="1"></path><path d="M8.200 4v9.500" stroke="#444" stroke-width="1" stroke-dasharray="2 1"></path></svg>
<div class="t" style="left:116px;top:692px"><span style="font-size: 11px; letter-spacing: 0.74px;">Job Scheduler</span></div>
<svg style="left:80px;top:711px" width="13" height="9" viewBox="0 0 13 9"><circle cx="4" cy="4" r="2.900" fill="#f0f0f0" stroke="#000" stroke-width="1.600"></circle><circle cx="4" cy="4" r="1.200" fill="#555"></circle><path d="M7 4h5" stroke="#000" stroke-width="1.800"></path></svg>
<svg style="left:96px;top:707px" width="17" height="15" viewBox="0 0 17 15"><path d="M1 14V4.500h9.500l1.500-2.500h4v12z" fill="#d4d4f2" stroke="#111" stroke-width="1.300"></path><path d="M11 4.300l1.300-2h3.400v2z" fill="#666"></path><path d="M10.500 4.500h5.500" stroke="#111" stroke-width="1.200"></path></svg>
<div class="t" style="left:116px;top:709px"><span style="font-size: 11px; letter-spacing: 0.68px;">Policies</span></div>
<svg style="left:80px;top:728px" width="13" height="9" viewBox="0 0 13 9"><circle cx="4" cy="4" r="2.900" fill="#f0f0f0" stroke="#000" stroke-width="1.600"></circle><circle cx="4" cy="4" r="1.200" fill="#555"></circle><path d="M7 4h5" stroke="#000" stroke-width="1.800"></path></svg>
<svg style="left:96px;top:724px" width="17" height="15" viewBox="0 0 17 15"><path d="M1 14V4.500h9.500l1.500-2.500h4v12z" fill="#d4d4f2" stroke="#111" stroke-width="1.300"></path><path d="M11 4.300l1.300-2h3.400v2z" fill="#666"></path><path d="M10.500 4.500h5.500" stroke="#111" stroke-width="1.200"></path></svg>
<div class="t" style="left:116px;top:726px"><span style="font-size: 11px; letter-spacing: 0.77px;">Computed Facts</span></div>
<svg style="left:0;top:0" width="0" height="0"><defs><pattern id="bump" width="4" height="4" patternUnits="userSpaceOnUse"><rect x="0" y="0" width="1" height="1" fill="#fff"></rect><rect x="1" y="1" width="1" height="1" fill="#666"></rect><rect x="2" y="2" width="1" height="1" fill="#fff"></rect><rect x="3" y="3" width="1" height="1" fill="#666"></rect></pattern></defs></svg>
<svg style="left:352px;top:196px" width="4" height="740" shape-rendering="crispEdges"><g transform="translate(0,0)"><rect x="0" y="0" width="4" height="740" fill="url(#bump)"></rect></g></svg>
<svg style="left:57px;top:146px" width="8" height="44" shape-rendering="crispEdges"><g transform="translate(0,0)"><rect x="0" y="0" width="8" height="44" fill="url(#bump)"></rect></g></svg>
<div class="a" style="left:358px;top:193px;width:2px;height:744px;background:#7a7a7a"></div>
<div class="a" style="left:359px;top:191px;width:1034px;height:18px;background:linear-gradient(#6e6e6e 0,#8a8a8a 15%,#999 50%,#aaa 100%)"></div>
<div class="a" style="left:359px;top:209px;width:1034px;height:1px;background:#d8d8d8"></div>
<svg style="left:834px;top:192px" width="16" height="16" viewBox="0 0 16 16"><path d="M1.500 1.500h7.500l2.500 2.500v10.500h-10z" fill="#fff" stroke="#111" stroke-width="1.300"></path><path d="M3 5l6 6M9 5l-6 6M6 4v8M2.500 8h7" stroke="#222" stroke-width="0.800"></path><path d="M8.500 8.500l6 6M14.500 8.500l-6 6M11.500 8v7M8 11.500h7" stroke="#222" stroke-width="0.800"></path></svg>
<div class="t" style="left:854px;top:194px;color:#5c5c5c"><span style="font-size: 11px; letter-spacing: 0.7px;">Provisioner</span></div>
<div class="a" style="left:363px;top:211px;width:24px;height:23px;border:1px solid #b4b4b4;background:#ccc"></div>
<div class="a" style="left:389px;top:211px;width:24px;height:23px;border:1px solid #b4b4b4;background:#ccc"></div>
<div class="a" style="left:415px;top:211px;width:24px;height:23px;border:1px solid #b4b4b4;background:#ccc"></div>
<div class="a" style="left:441px;top:211px;width:24px;height:23px;border:1px solid #b4b4b4;background:#ccc"></div>
<div class="btn" style="left:478px;top:211px;width:24px;height:22px"></div>
<div class="a" style="left:370px;top:217px;width:3px;height:11px;background:#a0a0a0"></div><div class="a" style="left:376px;top:217px;width:3px;height:11px;background:#a0a0a0"></div>
<div class="a" style="left:396px;top:217px;width:10px;height:10px;background:#a0a0a0;border:1px solid #aeaeae"></div>
<svg style="left:424px;top:216px" width="8" height="13"><path d="M0 0l8 6.500-8 6.500z" fill="#a0a0a0"></path></svg>
<svg style="left:445px;top:214px" width="18" height="17"><rect x="1.500" y="3.500" width="12" height="11" fill="#a8a8a8" stroke="#999"></rect><path d="M4 9l3 3 8-9" stroke="#8c8c8c" stroke-width="2" fill="none"></path><path d="M12 1h5v5z" fill="#999"></path></svg>
<svg style="left:482px;top:214px" width="17" height="17" viewBox="0 0 17 17"><path d="M5 0.500h7l4.500 4.500v7l-4.500 4.500h-7l-4.500-4.500v-7z" fill="#c01818" stroke="#701010" stroke-width="1"></path><path d="M5.200 5.200l6.600 6.600M11.800 5.200l-6.600 6.600" stroke="#fff" stroke-width="2.400" stroke-linecap="round"></path></svg>
<div class="t" style="left:365px;top:237px"><span style="font-size: 11px; letter-spacing: 0.72px;">Count: 8</span></div>
<div class="a" style="left:365px;top:252px;width:1021px;height:195px;background:#fff;border:1px solid #666;box-shadow:1px 1px 0 #fff"></div>
<div class="a" style="left:365px;top:252px;width:1021px;height:16px;background:#ccc;border-top:1px solid #666;border-left:1px solid #666"></div>
<div class="hc" style="left:366px;top:253px;width:83px;letter-spacing:.28px;"><span style="font-size: 11px; letter-spacing: 0.79px;">Request Time</span></div>
<div class="hc" style="left:449px;top:253px;width:71px;text-align:left;padding-left:21px;letter-spacing:-.3px;"><span style="font-size: 11px; letter-spacing: 0.12px;">VM Inst...</span></div>
<div class="hc" style="left:520px;top:253px;width:73px;text-align:left;padding-left:0;letter-spacing:.13px;"><span style="font-size: 11px; letter-spacing: 0.63px;">Req User ID</span></div>
<div class="hc" style="left:593px;top:253px;width:65px;"><span style="font-size: 11px; letter-spacing: 0.5px;">Req Job ID</span></div>
<div class="hc" style="left:658px;top:253px;width:57px;letter-spacing:-.2px;padding-left:3px;"><span style="font-size: 11px; letter-spacing: 0.35px;">VM Host</span></div>
<div class="hc" style="left:715px;top:253px;width:126px;"><span style="font-size: 11px; letter-spacing: 0.47px;">State</span></div>
<div class="hc" style="left:841px;top:253px;width:79px;text-align:left;padding-left:0;"><span style="font-size: 11px; letter-spacing: 0.45px;">Current Action</span></div>
<div class="hc" style="left:920px;top:253px;width:60px;"><span style="font-size: 11px; letter-spacing: 0.4px;">Provisio...</span></div>
<div class="hc" style="left:980px;top:253px;width:75px;"><span style="font-size: 11px; letter-spacing: 0.42px;">Action Elap...</span></div>
<div class="hc" style="left:1055px;top:253px;width:125px;text-align:left;padding-left:0;"><span style="font-size: 11px; letter-spacing: 0.47px;">VM Template/Refere...</span></div>
<div class="hc" style="left:1180px;top:253px;width:67px;"><span style="font-size: 11px; letter-spacing: 0.39px;">Startup Ti...</span></div>
<div class="hc" style="left:1247px;top:253px;width:78px;"><span style="font-size: 11px; letter-spacing: 0.48px;">Reservation</span></div>
<div class="hc" style="left:1325px;top:253px;width:61px;letter-spacing:-.3px;"><span style="font-size: 11px; letter-spacing: 0.32px;">Mode</span></div>
<svg style="left:451px;top:255px" width="13" height="10" viewBox="0 0 13 10"><path d="M5 0.700h3M3.500 3.200h6M2 5.700h9M0.500 8.500h12" stroke="#111" stroke-width="1.500"></path><path d="M5 1.900h3M3.500 4.400h6M2 6.900h9" stroke="#777" stroke-width="0.900"></path></svg>
<div class="row" style="left:366px;top:268px;width:1020px">
<div class="c ctr" style="left:0px;width:83px;"><span style="font-size: 11px; letter-spacing: 0.61px;">18:25:50</span></div>
<div class="c" style="left:83px;width:71px;padding-left:25px;"><svg style="left:3px;top:1px" width="18" height="15" preserveAspectRatio="none" viewBox="0 0 17 15"><rect x="1.500" y="0.500" width="12" height="9" fill="#2a1410"></rect><rect x="8.500" y="0" width="7" height="7.500" rx="1.500" fill="#f0b080"></rect><path d="M10.500 2.500l1.500 3 1.500-3" stroke="#703010" stroke-width="1" fill="none"></path><path d="M3 9.500h9v1.500h-9z" fill="#2a1410"></path><path d="M0.500 14l1.500-3h11l2 3z" fill="#b84848"></path><path d="M2.500 12.500h11" stroke="#e8b0b0" stroke-width="1" stroke-dasharray="1 1"></path></svg><span style="font-size: 11px; letter-spacing: 0.54px;">redha...</span></div>
<div class="c" style="left:154px;width:73px;"><span style="font-size: 11px; letter-spacing: 0.6px;">gmsSyste...</span></div>
<div class="c" style="left:227px;width:65px;"></div>
<div class="c" style="left:292px;width:57px;"><span style="font-size: 11px; letter-spacing: 0.64px;">esx6</span></div>
<div class="c" style="left:349px;width:126px;"><span style="font-size: 11px; letter-spacing: 0.65px;">Launching VM</span></div>
<div class="c" style="left:475px;width:79px;"><span style="font-size: 11px; letter-spacing: 0.52px;">Provision/...</span></div>
<div class="c" style="left:554px;width:60px;"><span style="font-size: 11px; letter-spacing: 0.6px;">gmsSy...</span></div>
<div class="c ctr" style="left:614px;width:75px;"><span style="font-size: 11px; letter-spacing: 0.6px;">0:00:20</span></div>
<div class="c" style="left:689px;width:125px;"><span style="font-size: 11px; letter-spacing: 0.59px;">redhat</span></div>
<div class="c ctr" style="left:814px;width:67px;"><span style="font-size: 11px; letter-spacing: 0.58px;">n/a</span></div>
<div class="c" style="left:881px;width:78px;"><span style="font-size: 11px; letter-spacing: 0.58px;">n/a</span></div>
<div class="c" style="left:959px;width:61px;"><span style="font-size: 11px; letter-spacing: 0.6px;">Automa...</span></div>
</div>
<div class="row" style="left:366px;top:286px;width:1020px">
<div class="c ctr" style="left:0px;width:83px;"><span style="font-size: 11px; letter-spacing: 0.61px;">18:25:50</span></div>
<div class="c" style="left:83px;width:71px;padding-left:25px;"><svg style="left:3px;top:1px" width="18" height="15" preserveAspectRatio="none" viewBox="0 0 17 15"><rect x="1.500" y="0.500" width="12" height="9" fill="#2a1410"></rect><rect x="8.500" y="0" width="7" height="7.500" rx="1.500" fill="#f0b080"></rect><path d="M10.500 2.500l1.500 3 1.500-3" stroke="#703010" stroke-width="1" fill="none"></path><path d="M3 9.500h9v1.500h-9z" fill="#2a1410"></path><path d="M0.500 14l1.500-3h11l2 3z" fill="#b84848"></path><path d="M2.500 12.500h11" stroke="#e8b0b0" stroke-width="1" stroke-dasharray="1 1"></path></svg><span style="font-size: 11px; letter-spacing: 0.54px;">redha...</span></div>
<div class="c" style="left:154px;width:73px;"><span style="font-size: 11px; letter-spacing: 0.6px;">gmsSyste...</span></div>
<div class="c" style="left:227px;width:65px;"></div>
<div class="c" style="left:292px;width:57px;"><span style="font-size: 11px; letter-spacing: 0.64px;">esx4</span></div>
<div class="c" style="left:349px;width:126px;"><span style="font-size: 11px; letter-spacing: 0.65px;">Launching VM</span></div>
<div class="c" style="left:475px;width:79px;"><span style="font-size: 11px; letter-spacing: 0.52px;">Provision/...</span></div>
<div class="c" style="left:554px;width:60px;"><span style="font-size: 11px; letter-spacing: 0.6px;">gmsSy...</span></div>
<div class="c ctr" style="left:614px;width:75px;"><span style="font-size: 11px; letter-spacing: 0.6px;">0:00:20</span></div>
<div class="c" style="left:689px;width:125px;"><span style="font-size: 11px; letter-spacing: 0.59px;">redhat</span></div>
<div class="c ctr" style="left:814px;width:67px;"><span style="font-size: 11px; letter-spacing: 0.58px;">n/a</span></div>
<div class="c" style="left:881px;width:78px;"><span style="font-size: 11px; letter-spacing: 0.58px;">n/a</span></div>
<div class="c" style="left:959px;width:61px;"><span style="font-size: 11px; letter-spacing: 0.6px;">Automa...</span></div>
</div>
<div class="row" style="left:366px;top:304px;width:1020px">
<div class="c ctr" style="left:0px;width:83px;"><span style="font-size: 11px; letter-spacing: 0.61px;">18:25:50</span></div>
<div class="c" style="left:83px;width:71px;padding-left:25px;"><svg style="left:3px;top:1px" width="18" height="15" preserveAspectRatio="none" viewBox="0 0 17 15"><rect x="1.500" y="0.500" width="12" height="9" fill="#2a1410"></rect><rect x="8.500" y="0" width="7" height="7.500" rx="1.500" fill="#f0b080"></rect><path d="M10.500 2.500l1.500 3 1.500-3" stroke="#703010" stroke-width="1" fill="none"></path><path d="M3 9.500h9v1.500h-9z" fill="#2a1410"></path><path d="M0.500 14l1.500-3h11l2 3z" fill="#b84848"></path><path d="M2.500 12.500h11" stroke="#e8b0b0" stroke-width="1" stroke-dasharray="1 1"></path></svg><span style="font-size: 11px; letter-spacing: 0.54px;">redha...</span></div>
<div class="c" style="left:154px;width:73px;"><span style="font-size: 11px; letter-spacing: 0.6px;">gmsSyste...</span></div>
<div class="c" style="left:227px;width:65px;"></div>
<div class="c" style="left:292px;width:57px;"><span style="font-size: 11px; letter-spacing: 0.66px;">vmhost1</span></div>
<div class="c" style="left:349px;width:126px;letter-spacing:-.05px;"><span style="font-size: 11px; letter-spacing: 0.39px;">VM Active (no agent ...</span></div>
<div class="c" style="left:475px;width:79px;"></div>
<div class="c" style="left:554px;width:60px;"><span style="font-size: 11px; letter-spacing: 0.6px;">gmsSy...</span></div>
<div class="c ctr" style="left:614px;width:75px;"><span style="font-size: 11px; letter-spacing: 0.58px;">n/a</span></div>
<div class="c" style="left:689px;width:125px;"><span style="font-size: 11px; letter-spacing: 0.59px;">redhat</span></div>
<div class="c ctr" style="left:814px;width:67px;"><span style="font-size: 11px; letter-spacing: 0.61px;">18:26:02</span></div>
<div class="c" style="left:881px;width:78px;"><span style="font-size: 11px; letter-spacing: 0.58px;">n/a</span></div>
<div class="c" style="left:959px;width:61px;"><span style="font-size: 11px; letter-spacing: 0.6px;">Automa...</span></div>
</div>
<div class="row" style="left:366px;top:322px;width:1020px">
<div class="c ctr" style="left:0px;width:83px;"><span style="font-size: 11px; letter-spacing: 0.61px;">18:25:50</span></div>
<div class="c" style="left:83px;width:71px;padding-left:25px;"><svg style="left:3px;top:1px" width="18" height="15" preserveAspectRatio="none" viewBox="0 0 17 15"><rect x="1.500" y="0.500" width="12" height="9" fill="#2a1410"></rect><rect x="8.500" y="0" width="7" height="7.500" rx="1.500" fill="#f0b080"></rect><path d="M10.500 2.500l1.500 3 1.500-3" stroke="#703010" stroke-width="1" fill="none"></path><path d="M3 9.500h9v1.500h-9z" fill="#2a1410"></path><path d="M0.500 14l1.500-3h11l2 3z" fill="#b84848"></path><path d="M2.500 12.500h11" stroke="#e8b0b0" stroke-width="1" stroke-dasharray="1 1"></path></svg><span style="font-size: 11px; letter-spacing: 0.54px;">redha...</span></div>
<div class="c" style="left:154px;width:73px;"><span style="font-size: 11px; letter-spacing: 0.6px;">gmsSyste...</span></div>
<div class="c" style="left:227px;width:65px;"></div>
<div class="c" style="left:292px;width:57px;"><span style="font-size: 11px; letter-spacing: 0.64px;">esx3</span></div>
<div class="c" style="left:349px;width:126px;"><span style="font-size: 11px; letter-spacing: 0.65px;">Launching VM</span></div>
<div class="c" style="left:475px;width:79px;"><span style="font-size: 11px; letter-spacing: 0.52px;">Provision/...</span></div>
<div class="c" style="left:554px;width:60px;"><span style="font-size: 11px; letter-spacing: 0.6px;">gmsSy...</span></div>
<div class="c ctr" style="left:614px;width:75px;"><span style="font-size: 11px; letter-spacing: 0.6px;">0:00:20</span></div>
<div class="c" style="left:689px;width:125px;"><span style="font-size: 11px; letter-spacing: 0.59px;">redhat</span></div>
<div class="c ctr" style="left:814px;width:67px;"><span style="font-size: 11px; letter-spacing: 0.58px;">n/a</span></div>
<div class="c" style="left:881px;width:78px;"><span style="font-size: 11px; letter-spacing: 0.58px;">n/a</span></div>
<div class="c" style="left:959px;width:61px;"><span style="font-size: 11px; letter-spacing: 0.6px;">Automa...</span></div>
</div>
<div class="row sel" style="left:366px;top:340px;width:1020px">
<div class="c ctr" style="left:0px;width:83px;"><span style="font-size: 11px; letter-spacing: 0.61px;">18:25:50</span></div>
<div class="c" style="left:83px;width:71px;padding-left:25px;"><svg style="left:3px;top:1px" width="18" height="15" preserveAspectRatio="none" viewBox="0 0 17 15"><rect x="1.500" y="0.500" width="12" height="9" fill="#2a1410"></rect><rect x="8.500" y="0" width="7" height="7.500" rx="1.500" fill="#f0b080"></rect><path d="M10.500 2.500l1.500 3 1.500-3" stroke="#703010" stroke-width="1" fill="none"></path><path d="M3 9.500h9v1.500h-9z" fill="#2a1410"></path><path d="M0.500 14l1.500-3h11l2 3z" fill="#b84848"></path><path d="M2.500 12.500h11" stroke="#e8b0b0" stroke-width="1" stroke-dasharray="1 1"></path></svg><span style="font-size: 11px; letter-spacing: 0.54px;">redha...</span></div>
<div class="c" style="left:154px;width:73px;"><span style="font-size: 11px; letter-spacing: 0.6px;">gmsSyste...</span></div>
<div class="c" style="left:227px;width:65px;"></div>
<div class="c" style="left:292px;width:57px;"><span style="font-size: 11px; letter-spacing: 0.64px;">esx1</span></div>
<div class="c" style="left:349px;width:126px;"><span style="font-size: 11px; letter-spacing: 0.65px;">Launching VM</span></div>
<div class="c" style="left:475px;width:79px;"><span style="font-size: 11px; letter-spacing: 0.52px;">Provision/...</span></div>
<div class="c" style="left:554px;width:60px;"><span style="font-size: 11px; letter-spacing: 0.6px;">gmsSy...</span></div>
<div class="c ctr" style="left:614px;width:75px;"><span style="font-size: 11px; letter-spacing: 0.6px;">0:00:20</span></div>
<div class="c" style="left:689px;width:125px;"><span style="font-size: 11px; letter-spacing: 0.59px;">redhat</span></div>
<div class="c ctr" style="left:814px;width:67px;"><span style="font-size: 11px; letter-spacing: 0.58px;">n/a</span></div>
<div class="c" style="left:881px;width:78px;"><span style="font-size: 11px; letter-spacing: 0.58px;">n/a</span></div>
<div class="c" style="left:959px;width:61px;"><span style="font-size: 11px; letter-spacing: 0.6px;">Automa...</span></div>
</div>
<div class="row" style="left:366px;top:358px;width:1020px">
<div class="c ctr" style="left:0px;width:83px;"><span style="font-size: 11px; letter-spacing: 0.61px;">18:25:50</span></div>
<div class="c" style="left:83px;width:71px;padding-left:25px;"><svg style="left:3px;top:1px" width="18" height="15" preserveAspectRatio="none" viewBox="0 0 17 15"><rect x="1.500" y="0.500" width="12" height="9" fill="#2a1410"></rect><rect x="8.500" y="0" width="7" height="7.500" rx="1.500" fill="#f0b080"></rect><path d="M10.500 2.500l1.500 3 1.500-3" stroke="#703010" stroke-width="1" fill="none"></path><path d="M3 9.500h9v1.500h-9z" fill="#2a1410"></path><path d="M0.500 14l1.500-3h11l2 3z" fill="#b84848"></path><path d="M2.500 12.500h11" stroke="#e8b0b0" stroke-width="1" stroke-dasharray="1 1"></path></svg><span style="font-size: 11px; letter-spacing: 0.54px;">redha...</span></div>
<div class="c" style="left:154px;width:73px;"><span style="font-size: 11px; letter-spacing: 0.6px;">gmsSyste...</span></div>
<div class="c" style="left:227px;width:65px;"></div>
<div class="c" style="left:292px;width:57px;"><span style="font-size: 11px; letter-spacing: 0.64px;">esx5</span></div>
<div class="c" style="left:349px;width:126px;"><span style="font-size: 11px; letter-spacing: 0.65px;">Launching VM</span></div>
<div class="c" style="left:475px;width:79px;"><span style="font-size: 11px; letter-spacing: 0.52px;">Provision/...</span></div>
<div class="c" style="left:554px;width:60px;"><span style="font-size: 11px; letter-spacing: 0.6px;">gmsSy...</span></div>
<div class="c ctr" style="left:614px;width:75px;"><span style="font-size: 11px; letter-spacing: 0.6px;">0:00:20</span></div>
<div class="c" style="left:689px;width:125px;"><span style="font-size: 11px; letter-spacing: 0.59px;">redhat</span></div>
<div class="c ctr" style="left:814px;width:67px;"><span style="font-size: 11px; letter-spacing: 0.58px;">n/a</span></div>
<div class="c" style="left:881px;width:78px;"><span style="font-size: 11px; letter-spacing: 0.58px;">n/a</span></div>
<div class="c" style="left:959px;width:61px;"><span style="font-size: 11px; letter-spacing: 0.6px;">Automa...</span></div>
</div>
<div class="row" style="left:366px;top:376px;width:1020px">
<div class="c ctr" style="left:0px;width:83px;"><span style="font-size: 11px; letter-spacing: 0.61px;">18:25:50</span></div>
<div class="c" style="left:83px;width:71px;padding-left:25px;"><svg style="left:3px;top:1px" width="18" height="15" preserveAspectRatio="none" viewBox="0 0 17 15"><rect x="1.500" y="0.500" width="12" height="9" fill="#2a1410"></rect><rect x="8.500" y="0" width="7" height="7.500" rx="1.500" fill="#f0b080"></rect><path d="M10.500 2.500l1.500 3 1.500-3" stroke="#703010" stroke-width="1" fill="none"></path><path d="M3 9.500h9v1.500h-9z" fill="#2a1410"></path><path d="M0.500 14l1.500-3h11l2 3z" fill="#b84848"></path><path d="M2.500 12.500h11" stroke="#e8b0b0" stroke-width="1" stroke-dasharray="1 1"></path></svg><span style="font-size: 11px; letter-spacing: 0.54px;">redha...</span></div>
<div class="c" style="left:154px;width:73px;"><span style="font-size: 11px; letter-spacing: 0.6px;">gmsSyste...</span></div>
<div class="c" style="left:227px;width:65px;"></div>
<div class="c" style="left:292px;width:57px;"><span style="font-size: 11px; letter-spacing: 0.64px;">esx2</span></div>
<div class="c" style="left:349px;width:126px;"><span style="font-size: 11px; letter-spacing: 0.65px;">Launching VM</span></div>
<div class="c" style="left:475px;width:79px;"><span style="font-size: 11px; letter-spacing: 0.52px;">Provision/...</span></div>
<div class="c" style="left:554px;width:60px;"><span style="font-size: 11px; letter-spacing: 0.6px;">gmsSy...</span></div>
<div class="c ctr" style="left:614px;width:75px;"><span style="font-size: 11px; letter-spacing: 0.6px;">0:00:20</span></div>
<div class="c" style="left:689px;width:125px;"><span style="font-size: 11px; letter-spacing: 0.59px;">redhat</span></div>
<div class="c ctr" style="left:814px;width:67px;"><span style="font-size: 11px; letter-spacing: 0.58px;">n/a</span></div>
<div class="c" style="left:881px;width:78px;"><span style="font-size: 11px; letter-spacing: 0.58px;">n/a</span></div>
<div class="c" style="left:959px;width:61px;"><span style="font-size: 11px; letter-spacing: 0.6px;">Automa...</span></div>
</div>
<div class="row" style="left:366px;top:394px;width:1020px">
<div class="c ctr" style="left:0px;width:83px;"><span style="font-size: 11px; letter-spacing: 0.61px;">18:25:50</span></div>
<div class="c" style="left:83px;width:71px;padding-left:25px;"><svg style="left:3px;top:1px" width="18" height="15" preserveAspectRatio="none" viewBox="0 0 17 15"><rect x="1.500" y="0.500" width="12" height="9" fill="#2a1410"></rect><rect x="8.500" y="0" width="7" height="7.500" rx="1.500" fill="#f0b080"></rect><path d="M10.500 2.500l1.500 3 1.500-3" stroke="#703010" stroke-width="1" fill="none"></path><path d="M3 9.500h9v1.500h-9z" fill="#2a1410"></path><path d="M0.500 14l1.500-3h11l2 3z" fill="#b84848"></path><path d="M2.500 12.500h11" stroke="#e8b0b0" stroke-width="1" stroke-dasharray="1 1"></path></svg><span style="font-size: 11px; letter-spacing: 0.54px;">redha...</span></div>
<div class="c" style="left:154px;width:73px;"><span style="font-size: 11px; letter-spacing: 0.6px;">gmsSyste...</span></div>
<div class="c" style="left:227px;width:65px;"></div>
<div class="c" style="left:292px;width:57px;"><span style="font-size: 11px; letter-spacing: 0.64px;">esx7</span></div>
<div class="c" style="left:349px;width:126px;"><span style="font-size: 11px; letter-spacing: 0.65px;">Launching VM</span></div>
<div class="c" style="left:475px;width:79px;"><span style="font-size: 11px; letter-spacing: 0.52px;">Provision/...</span></div>
<div class="c" style="left:554px;width:60px;"><span style="font-size: 11px; letter-spacing: 0.6px;">gmsSy...</span></div>
<div class="c ctr" style="left:614px;width:75px;"><span style="font-size: 11px; letter-spacing: 0.6px;">0:00:20</span></div>
<div class="c" style="left:689px;width:125px;"><span style="font-size: 11px; letter-spacing: 0.59px;">redhat</span></div>
<div class="c ctr" style="left:814px;width:67px;"><span style="font-size: 11px; letter-spacing: 0.58px;">n/a</span></div>
<div class="c" style="left:881px;width:78px;"><span style="font-size: 11px; letter-spacing: 0.58px;">n/a</span></div>
<div class="c" style="left:959px;width:61px;"><span style="font-size: 11px; letter-spacing: 0.6px;">Automa...</span></div>
</div>
<div class="a" style="left:359px;top:452px;width:1034px;height:1px;background:#fff"></div>
<svg style="left:361px;top:454px" width="1030" height="4" shape-rendering="crispEdges"><g transform="translate(0,0)"><rect x="0" y="0" width="1030" height="4" fill="url(#bump)"></rect></g></svg>
<div class="a" style="left:359px;top:460px;width:1034px;height:1px;background:#b8b8b8"></div>
<div class="a" style="left:363px;top:481px;width:1029px;height:455px;background:#ccc;border:1px solid #666;border-left-color:#fff;border-top-color:#fff"></div>
<div class="a" style="left:363px;top:481px;width:1px;height:455px;background:#666"></div>
<div class="a" style="left:364px;top:482px;width:1px;height:453px;background:#fff"></div>
<svg style="left:366px;top:464px" width="100" height="18" viewBox="0 0 100 18"><path d="M0.500 18V6.500L6.500 0.500H99.5V18" fill="#999" stroke="#666" stroke-width="1"></path><path d="M1.500 18V7L7 1.500H98" fill="none" stroke="#b0b0b0" stroke-width="1"></path></svg>
<div class="t" style="left:377px;top:466px;letter-spacing:0.2px"><span style="font-size: 11px; letter-spacing: 0.67px;">Provision Log</span></div>
<svg style="left:465px;top:464px" width="142" height="18" viewBox="0 0 142 18"><path d="M0.500 18V6.500L6.500 0.500H141.5V18" fill="#ccc" stroke="#666" stroke-width="1"></path><path d="M1.500 18V7L7 1.500H140" fill="none" stroke="#fff" stroke-width="1"></path></svg>
<div class="t" style="left:475px;top:466px;letter-spacing:0.4px"><span style="font-size: 11px; letter-spacing: 0.9px;">Host Assignment Log</span></div>
<svg style="left:606px;top:464px" width="100" height="18" viewBox="0 0 100 18"><path d="M0.500 18V6.500L6.500 0.500H99.5V18" fill="#999" stroke="#666" stroke-width="1"></path><path d="M1.500 18V7L7 1.500H98" fill="none" stroke="#b0b0b0" stroke-width="1"></path></svg>
<div class="t" style="left:616px;top:466px;letter-spacing:0.13px"><span style="font-size: 11px; letter-spacing: 0.63px;">Autoprep Data</span></div>
<div class="a" style="left:467px;top:481px;width:138px;height:2px;background:#ccc"></div>
<div class="t" style="left:402px;top:492px;font-size:11px;letter-spacing:0"><span style="font-size: 10px; letter-spacing: 0.46px;">VM has been assigned the vmhost: 'esx1'. Reasoning based on default '[vmhost.loadindex.slots/a]' ranking is summarized below:</span></div>
<div class="a" style="left:397px;top:510px;width:961px;height:419px;background:#fff;border:1px solid #666"></div>
<div class="a" style="left:398px;top:511px;width:959px;height:14px;background:#ccc"></div>
<div class="hc" style="left:398px;top:511px;width:169px;height:14px;line-height:13px;padding-left:18px"><span style="font-size: 11px; letter-spacing: 0.56px;">Host Name</span></div>
<div class="hc" style="left:567px;top:511px;width:790px;height:14px;line-height:13px"><span style="font-size: 11px; letter-spacing: 0.47px;">Log Text</span></div>
<svg style="left:441px;top:512px" width="13" height="10" viewBox="0 0 13 10"><path d="M5 0.700h3M3.500 3.200h6M2 5.700h9M0.500 8.500h12" stroke="#111" stroke-width="1.500"></path><path d="M5 1.900h3M3.500 4.400h6M2 6.900h9" stroke="#777" stroke-width="0.900"></path></svg>
<div class="row sel" style="left:398px;top:525px;width:959px"><div class="c" style="left:0;width:169px;padding:1px 0 0 3px"><span style="font-size: 11px; letter-spacing: 0.64px;">esx1</span></div><div class="c" style="left:169px;width:790px;padding:1px 0 0 3px;border-right:0;letter-spacing:.27px"><span style="font-size: 11px; letter-spacing: 0.71px;">** Assigned **</span></div></div>
<div class="row" style="left:398px;top:543px;width:959px"><div class="c" style="left:0;width:169px;padding:1px 0 0 3px"><span style="font-size: 11px; letter-spacing: 0.64px;">esx2</span></div><div class="c" style="left:169px;width:790px;padding:1px 0 0 3px;border-right:0;letter-spacing:.27px"><span style="font-size: 11px; letter-spacing: 0.71px;">- Possible 2nd choice, but not optimal</span></div></div>
<div class="row" style="left:398px;top:561px;width:959px"><div class="c" style="left:0;width:169px;padding:1px 0 0 3px"><span style="font-size: 11px; letter-spacing: 0.64px;">esx3</span></div><div class="c" style="left:169px;width:790px;padding:1px 0 0 3px;border-right:0;letter-spacing:.27px"><span style="font-size: 11px; letter-spacing: 0.7px;">- Possible 3rd choice, but not optimal</span></div></div>
<div class="row" style="left:398px;top:579px;width:959px"><div class="c" style="left:0;width:169px;padding:1px 0 0 3px"><span style="font-size: 11px; letter-spacing: 0.64px;">esx4</span></div><div class="c" style="left:169px;width:790px;padding:1px 0 0 3px;border-right:0;letter-spacing:.27px"><span style="font-size: 11px; letter-spacing: 0.7px;">- Possible 4th choice, but not optimal</span></div></div>
<div class="row" style="left:398px;top:597px;width:959px"><div class="c" style="left:0;width:169px;padding:1px 0 0 3px"><span style="font-size: 11px; letter-spacing: 0.64px;">esx5</span></div><div class="c" style="left:169px;width:790px;padding:1px 0 0 3px;border-right:0;letter-spacing:.27px"><span style="font-size: 11px; letter-spacing: 0.7px;">- Possible 5th choice, but not optimal</span></div></div>
<div class="row" style="left:398px;top:615px;width:959px"><div class="c" style="left:0;width:169px;padding:1px 0 0 3px"><span style="font-size: 11px; letter-spacing: 0.64px;">esx6</span></div><div class="c" style="left:169px;width:790px;padding:1px 0 0 3px;border-right:0;letter-spacing:.27px"><span style="font-size: 11px; letter-spacing: 0.7px;">- Possible 6th choice, but not optimal</span></div></div>
<div class="row" style="left:398px;top:633px;width:959px"><div class="c" style="left:0;width:169px;padding:1px 0 0 3px"><span style="font-size: 11px; letter-spacing: 0.64px;">esx7</span></div><div class="c" style="left:169px;width:790px;padding:1px 0 0 3px;border-right:0;letter-spacing:.27px"><span style="font-size: 11px; letter-spacing: 0.7px;">- Possible 7th choice, but not optimal</span></div></div>
<div class="row" style="left:398px;top:651px;width:959px"><div class="c" style="left:0;width:169px;padding:1px 0 0 3px"><span style="font-size: 11px; letter-spacing: 0.64px;">esx8</span></div><div class="c" style="left:169px;width:790px;padding:1px 0 0 3px;border-right:0;letter-spacing:.27px"><span style="font-size: 11px; letter-spacing: 0.71px;">VM host is not online</span></div></div>
<div class="row" style="left:398px;top:669px;width:959px"><div class="c" style="left:0;width:169px;padding:1px 0 0 3px"><span style="font-size: 11px; letter-spacing: 0.66px;">vmhost1</span></div><div class="c" style="left:169px;width:790px;padding:1px 0 0 3px;border-right:0;letter-spacing:.27px"><span style="font-size: 11px; letter-spacing: 0.7px;">- Possible 8th choice, but not optimal</span></div></div>
<div class="row" style="left:398px;top:687px;width:959px"><div class="c" style="left:0;width:169px;padding:1px 0 0 3px"><span style="font-size: 11px; letter-spacing: 0.66px;">vmhost2</span></div><div class="c" style="left:169px;width:790px;padding:1px 0 0 3px;border-right:0;letter-spacing:.27px"><span style="font-size: 11px; letter-spacing: 0.7px;">- Possible 9th choice, but not optimal</span></div></div>
<div class="row" style="left:398px;top:705px;width:959px"><div class="c" style="left:0;width:169px;padding:1px 0 0 3px"><span style="font-size: 11px; letter-spacing: 0.66px;">vmhost3</span></div><div class="c" style="left:169px;width:790px;padding:1px 0 0 3px;border-right:0;letter-spacing:.27px"><span style="font-size: 11px; letter-spacing: 0.7px;">- Possible 10th choice, but not optimal</span></div></div>
<div class="row" style="left:398px;top:723px;width:959px"><div class="c" style="left:0;width:169px;padding:1px 0 0 3px"><span style="font-size: 11px; letter-spacing: 0.66px;">vmhost4</span></div><div class="c" style="left:169px;width:790px;padding:1px 0 0 3px;border-right:0;letter-spacing:.27px"><span style="font-size: 11px; letter-spacing: 0.7px;">- Possible 11th choice, but not optimal</span></div></div>
<div class="row" style="left:398px;top:741px;width:959px"><div class="c" style="left:0;width:169px;padding:1px 0 0 3px"><span style="font-size: 11px; letter-spacing: 0.66px;">vmhost5</span></div><div class="c" style="left:169px;width:790px;padding:1px 0 0 3px;border-right:0;letter-spacing:.27px"><span style="font-size: 11px; letter-spacing: 0.7px;">- Possible 12th choice, but not optimal</span></div></div>
<div class="a" style="left:56px;top:938px;width:1287px;height:23px;background:#fff;border:1px solid #808080;border-bottom-color:#ddd"></div>
<div class="a" style="left:1345px;top:939px;width:48px;height:22px;background:#ccc;border:1px solid #fff;border-right-color:#808080;border-bottom-color:#808080"></div>
<svg style="left:1360px;top:944px" width="16" height="12" viewBox="0 0 16 12"><path d="M8 0.500l6.500 6h-13z" fill="#f0a860" stroke="#222" stroke-width="0.800"></path><path d="M8 4.500l7 6.500h-14z" fill="#f0a050" stroke="#222" stroke-width="0.800"></path></svg>
</div></body></html>
